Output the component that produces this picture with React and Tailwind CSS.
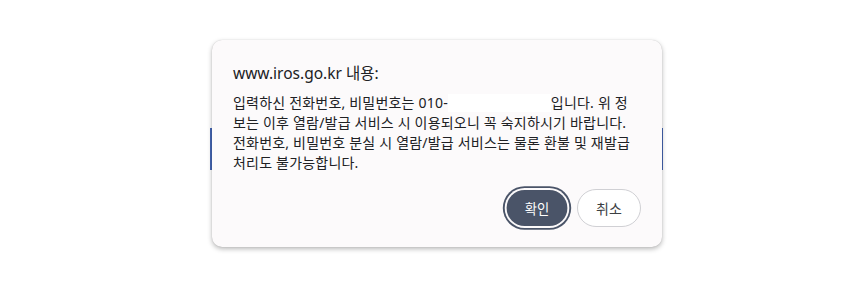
export default function App() {
  const kr = { fontFamily: '"Noto Sans", "Noto Sans CJK KR", sans-serif' };
  return (
    <div className="relative w-[850px] h-[282px] bg-white overflow-hidden" style={kr}>
      {/* page content behind the dialog */}
      <div className="pt-[128px] pl-[210px]">
        <div className="w-[453px] h-[42px] bg-[#4566b4]" />
      </div>

      {/* dialog overlay */}
      <div className="absolute left-[212px] top-[40px] w-[450px] h-[207px] rounded-[10px] bg-[#fcfafb] shadow-[0_2px_5px_rgba(0,0,0,0.28),0_0_1px_rgba(0,0,0,0.2)] flex flex-col pl-[21px] pr-[21px] pt-[21px] pb-[20px]">
        <div className="text-[15.5px] leading-[24px] text-[#202124]">www.iros.go.kr 내용:</div>
        <div className="mt-[8px] text-[14px] leading-[20px] tracking-[0.2px] text-[#202124]">
          <div className="flex items-center whitespace-nowrap">
            <span>입력하신 전화번호, 비밀번호는 010-</span>
            <span className="inline-block w-[103px] h-[18px] bg-white" />
            <span>입니다. 위 정</span>
          </div>
          <div className="whitespace-nowrap">보는 이후 열람/발급 서비스 시 이용되오니 꼭 숙지하시기 바랍니다.</div>
          <div className="whitespace-nowrap">전화번호, 비밀번호 분실 시 열람/발급 서비스는 물론 환불 및 재발급</div>
          <div className="whitespace-nowrap">처리도 불가능합니다.</div>
        </div>
        <div className="mt-auto flex justify-end gap-[8px]">
          <button className="w-[64px] h-[38px] rounded-full bg-[#4a5468] text-white text-[14px] ring-2 ring-[#4a5468] ring-offset-2 ring-offset-[#fcfafb] [transform:scale(0.95)]">
            확인
          </button>
          <button className="w-[64px] h-[38px] rounded-full bg-white border border-[#d0d0d4] text-[#3c4043] text-[14px]">
            취소
          </button>
        </div>
      </div>
    </div>
  );
}
